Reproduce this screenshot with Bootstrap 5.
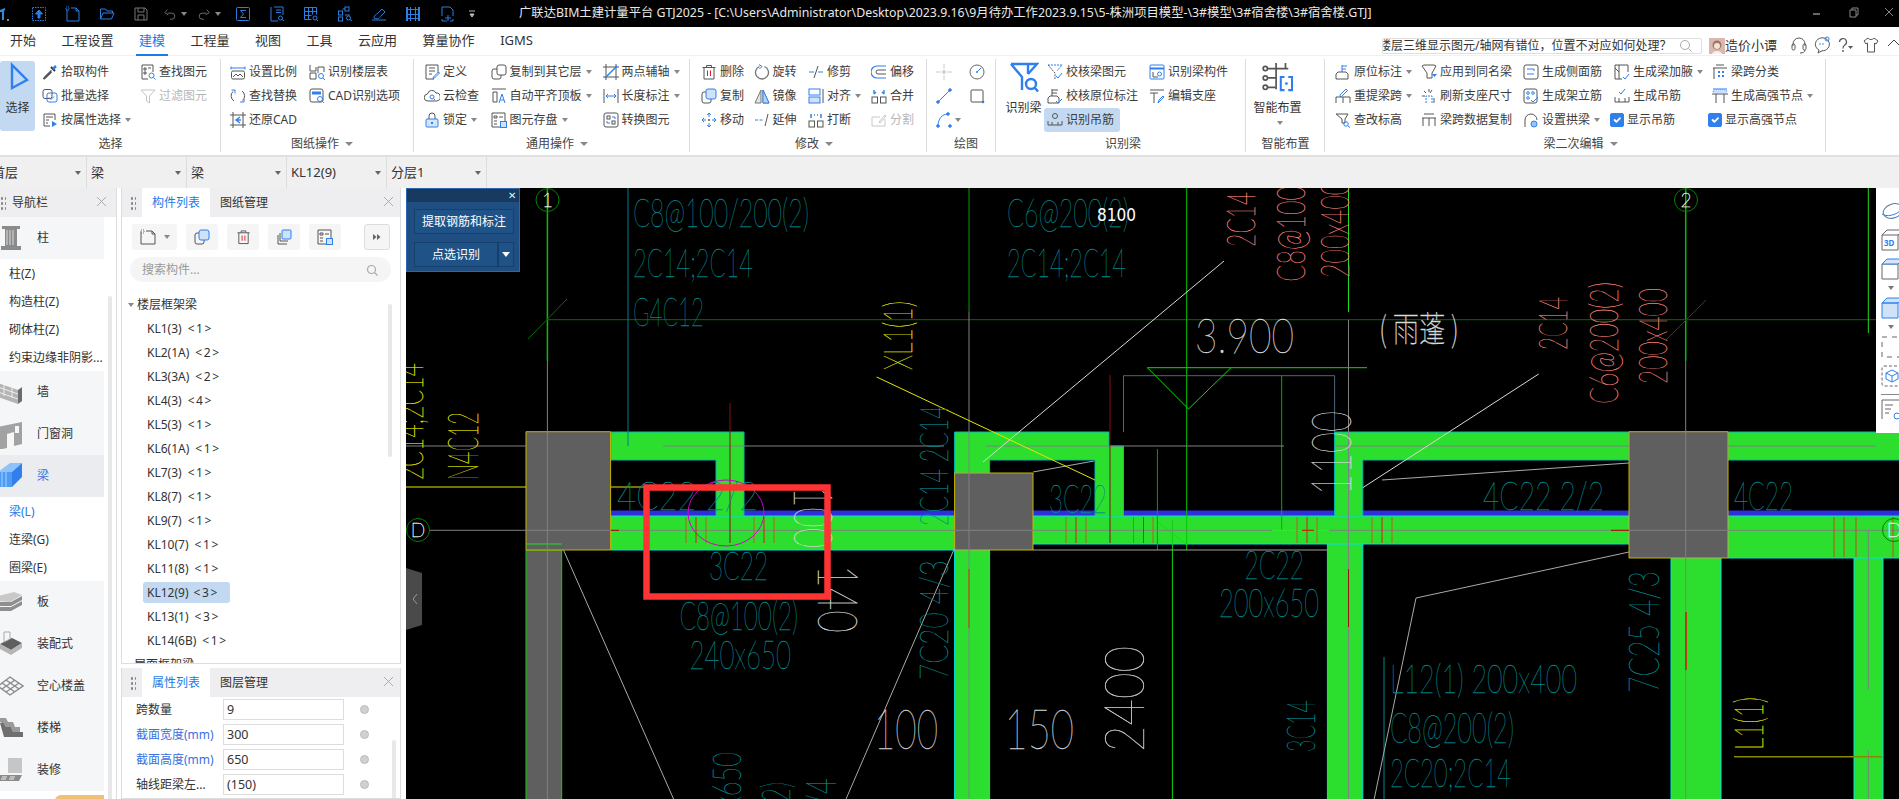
<!DOCTYPE html>
<html lang="zh-CN">
<head>
<meta charset="UTF-8">
<title>广联达BIM土建计量平台 GTJ2025</title>
<link href="https://cdn.jsdelivr.net/npm/bootstrap@5.3.0/dist/css/bootstrap.min.css" rel="stylesheet">
<style>
html, body { height: 799px; overflow: hidden; }
body { font-family: "Noto Sans", "Noto Sans CJK SC", sans-serif; font-size: 12px; color: #333; background: #fff; width: 1899px; }
svg { display: block; flex: none; }
.ttl-bar { height: 27px; background: #000; color: #e8e8e8; font-size: 13px; }
.qa-logo { width: 22px; }
.qa-slot { width: 34px; height: 27px; }
.qa-more { width: 16px; margin-right: 39px; }
.ttl-text { white-space: nowrap; font-size: 12.33px; }
.win-btn { position: absolute; top: 6px; }
.win-min { left: 1812px; } .win-max { left: 1849px; } .win-cls { left: 1884px; }
.tab-row { height: 28px; padding-left: 10px; gap: 25.5px; font-size: 13px; position: relative; }
.tab-on { color: #1e7ae6; position: relative; }
.tab-on::after { content: ""; position: absolute; left: -3px; right: -3px; bottom: -5px; height: 2px; background: #1e7ae6; }
.hlp-search { position: absolute; left: 1382px; top: 11px; width: 320px; height: 16px; border: 1px solid #e0e0e0; border-radius: 2px; overflow: hidden; white-space: nowrap; font-size: 12px; line-height: 14px; color: #333; }
.hlp-search span { margin-left: -4px; }
.hlp-user { position: absolute; left: 1709px; top: 10px; height: 17px; }
.hlp-ic { position: absolute; top: 9px; }
.hi-a { left: 1791px; } .hi-b { left: 1814px; } .hi-c { left: 1838px; } .hi-d { left: 1863px; } .hi-e { left: 1888px; }
.rb { height: 102px; border-top: 1px solid #f0f0f0; border-bottom: 2px solid #e0e0e0; }
.rb-grp { position: relative; height: 99px; display: flex; flex-direction: column; flex: none; }
.rb-grp::after { content: ""; position: absolute; right: 0; top: 3px; bottom: 3px; width: 1px; background: #ddd; }
.rb-body { height: 76px; padding-top: 4px; display: flex; flex: none; }
.rb-cap { height: 23px; line-height: 23px; text-align: center; color: #444; flex: none; }
.rb-col { display: flex; flex-direction: column; flex: none; }
.rb-it { height: 24px; display: flex; align-items: center; white-space: nowrap; color: #3c3c3c; }
.rb-it svg { width: 16px; height: 16px; margin-right: 3px; }
.rb-off { color: #b8b8b8; }
.rb-big { display: flex; flex-direction: column; align-items: center; flex: none; height: 70px; margin-top: 1px; }
.big-ic { margin-top: 1px; height: 30px; }
.big-lb { margin-top: 7px; line-height: 18px; }
.big-tri { margin: 4px 0 0 0; }
.big-smart { width: 63px; }
.rb-sel { background: #c2d9f1; border-radius: 3px; }
.tri { display: inline-block; border: 3px solid transparent; border-top: 4px solid #888; border-bottom: 0; margin-left: 4px; }
.tri-cap { border-width: 4px 4px 0; margin-left: 6px; vertical-align: 2px; }
.rb-chk.form-check-input { width: 14px; height: 14px; margin: 0 3px 0 -4px; border-radius: 2px; background-color: #2f80ed; border-color: #2f80ed; flex: none; }
.g1 { width: 221px; } .g2 { width: 193px; padding-left: 9px; } .g3 { width: 276px; padding-left: 10px; } .g4 { width: 237px; padding-left: 11px; }
.g5 { width: 69px; padding-left: 9px; } .g6 { width: 250px; padding-left: 4px; } .g7 { width: 79px; } .g8 { width: 501px; padding-left: 10px; }
.cw-35 { width: 35px; margin-right: 7px; } .cw-98 { width: 98px; } .cw-79 { width: 79px; } .cw-66 { width: 66.5px; } .cw-112 { width: 112px; }
.cw-52 { width: 52.5px; } .cw-54 { width: 54.5px; } .cw-63 { width: 63px; } .cw-32 { width: 32.5px; } .cw-47 { width: 47px; } .cw-102 { width: 102px; }
.cw-86 { width: 86px; } .cw-91 { width: 91px; }
.ind-sel { margin-left: -3px; padding-left: 3px; width: 76px; }
.cmb-bar { height: 31px; background: #f0f0f0; }
.cmb { width: 100px; height: 31px; border-right: 1px solid #ddd; padding: 0 5px 0 4px; font-size: 13px; flex: none; overflow: hidden; white-space: nowrap; }
.cmb-first { width: 87px; padding-left: 0; }
.cmb-first span:first-child { margin-left: -8px; }
.cmb-tri { border: 3px solid transparent; border-top: 4px solid #666; border-bottom: 0; }
.wk { height: 611px; }
.nv { width: 117px; border-right: 1px solid #ddd; position: relative; overflow: hidden; flex: none; }
.pn-head { height: 29px; background: #eeeef0; flex: none; position: relative; }
.grip { width: 6px; height: 14px; background-image: radial-gradient(circle, #888 1.1px, transparent 1.2px); background-size: 4px 5px; }
.nv-grip { margin-right: 6px; }
.pn-x { position: absolute; right: 6px; top: 8px; }
.nv .pn-x { right: 9px; }
.nv-cat { width: 104px; height: 42px; background: #f5f6f8; display: flex; align-items: center; }
.nv-cat svg { width: 26px; height: 30px; margin-left: -2px; margin-right: 13px; }
.nv-on { background: #ebecf0; color: #3d73d8; }
.nv-sub { height: 28px; line-height: 30px; padding-left: 9px; width: 104px; white-space: nowrap; }
.nv-sub-on { color: #1e7ae6; }
.nv-promo { width: 49px; height: 8px; margin: 4px 0 0 55px; background: #f0c078; border-radius: 6px 0 0 0; }
.sbar { position: absolute; background: #e8e8e8; border-radius: 2px; width: 4px; }
.nv-sbar { left: 108px; top: 108px; height: 520px; }
.list-sbar { left: 266px; top: 116px; height: 153px; }
.attr-sbar { left: 270px; top: 72px; height: 70px; }
.mid { width: 280px; margin-left: 4px; gap: 4px; flex: none; }
.pn { border: 1px solid #ddd; border-top: 0; position: relative; overflow: hidden; }
.pn-list { height: 476px; flex: none; }
.pn-grip { margin: 0 6px 0 8px; }
.pn-tab { height: 29px; line-height: 29px; width: 68px; text-align: center; flex: none; }
.pn-tab-on { background: #fff; color: #1e7ae6; }
.pn-tab-off { margin-left: 10px; width: 48px; }
.tbr { padding: 7px 10px 0 10px; gap: 9px; }
.tbt { width: 32px; height: 26px; background: #f5f5f6; border-radius: 3px; flex: none; }
.tbt-new { width: 45px; }
.tbt-new i { border: 3px solid transparent; border-top: 4px solid #888; border-bottom: 0; margin-left: 8px; }
.tbt-more { width: 26px; margin-left: auto; border: 1px solid #ddd; color: #555; }
.srch { margin: 7px 9px 0 8px; height: 26px; background: #f5f5f6; border-radius: 13px; padding: 1px 13px 0 12px; color: #999; font-size: 12px; }
.tree { margin-top: 11px; }
.tr-row { height: 24px; line-height: 24px; white-space: pre; padding-left: 12px; }
.tr-row i { display: inline-block; border: 3px solid transparent; border-top: 4px solid #888; border-bottom: 0; margin: 0 3px 2px -6px; vertical-align: middle; }
.tr-kl { padding-left: 25px; }
.tr-kl b { font-weight: 400; letter-spacing: 1.6px; margin-left: 6px; }
.tr-on { background: #c2d9f1; border-radius: 3px; margin-left: 21px; padding-left: 4px; width: 87px; height: 21px; line-height: 21px; margin-top: 1px; margin-bottom: 2px; }
.tr-on b { font-weight: 400; letter-spacing: 1.6px; margin-left: 5px; }
.at-row { height: 25px; padding-left: 14px; }
.at-lab { width: 87px; flex: none; white-space: nowrap; }
.at-blue { color: #3a6fe0; }
.at-val { width: 121px; height: 21px; line-height: 19px; border: 1px solid #ddd; padding-left: 3px; font-size: 12.5px; flex: none; }
.at-dot { width: 9px; height: 9px; border-radius: 50%; background: #d0d0d0; border: 1px solid #bbb; margin-left: 16px; }
.cv { position: relative; margin-left: 5px; width: 1494px; height: 611px; background: #000; flex: none; overflow: hidden; }
.cv > svg { width: 1494px; height: 611px; }
.dlg { position: absolute; left: 0; top: 0; width: 114px; height: 84px; background: #1f4e82; border: 1px solid #2d67a9; color: #fff; }
.dlg-top { height: 13px; background: #183a60; text-align: right; padding-right: 3px; line-height: 12px; font-size: 10px; color: #cfe; }
.dlg-btn { background: #1f5286; border: 1px solid #163f6b; height: 25px; margin: 0 0 0 7px; }
.dlg-wide { width: 100px; margin-top: 7px; }
.dlg-split { width: 84px; }
.dlg-arr { width: 16px; margin-left: 0; }
.dlg-arr i { border: 4px solid transparent; border-top: 5px solid #fff; border-bottom: 0; }
.rtb { position: absolute; right: 0; top: 0; width: 24px; height: 245px; background: #fff; padding: 12px 0 0 5px; overflow: hidden; }
.rtb svg { width: 22px; height: 22px; margin-bottom: 7px; }
.rtb i { display: block; margin: -1px 0 7px 7px; width: 0; border: 3px solid transparent; border-top: 4px solid #777; border-bottom: 0; }
.rtb hr { margin: 0 0 4px 0; opacity: 1; border-color: #888; }
.cad-t { font-family: Lato, "Noto Sans", sans-serif; font-weight: 100; }
.cad-cn { font-family: "Noto Sans CJK SC", sans-serif; font-weight: 100; }
</style>
</head>
<body>
<svg width="0" height="0" class="position-absolute">
<symbol id="q-up" viewBox="0 0 16 16" fill="none" stroke="#2b7fe0"><rect x="1.5" y="1.5" width="13" height="13" stroke-dasharray="1.5 1"/><path d="M8 4 4.5 8H7v4h2V8h2.500z" fill="#2b7fe0"/></symbol>
<symbol id="q-new" viewBox="0 0 16 16" fill="none" stroke="#2b7fe0"><path d="M2 3v12h12V5l-3-3H6"/><path d="M11 2v3h3" /><path d="M1 1h3v3H1z" stroke-dasharray="1 1"/></symbol>
<symbol id="q-open" viewBox="0 0 16 16" fill="none" stroke="#2b7fe0"><path d="M1.500 13V3h5l1.500 2h5.500v2M1.500 13l2.500-6h11l-2.500 6z"/></symbol>
<symbol id="q-save" viewBox="0 0 16 16" fill="none" stroke="#777"><path d="M2 2h10l2 2v10H2zM5 2v4h6V2M5 14V9h6v5"/></symbol>
<symbol id="q-undo" viewBox="0 0 16 16" fill="none" stroke="#777"><path d="M5 7H10a3.500 3.500 0 0 1 0 7H8M5 3 2 6.500 6 9"/></symbol>
<symbol id="q-redo" viewBox="0 0 16 16" fill="none" stroke="#777"><path d="M11 7H6a3.500 3.500 0 0 0 0 7h2M11 3l3 3.500L10 9"/></symbol>
<symbol id="q-sum" viewBox="0 0 16 16" fill="none" stroke="#2b7fe0"><rect x="1.500" y="1.500" width="13" height="13" rx="1"/><path d="M11 4.500H5.500L8.500 8l-3 3.500H11"/></symbol>
<symbol id="q-rep" viewBox="0 0 16 16" fill="none" stroke="#2b7fe0"><path d="M2 1v14h7"/><path d="M5 1h9v8M7 4h5M7 6.500h5"/><circle cx="11.500" cy="12" r="2"/><path d="m13 13.500 2 1.500"/></symbol>
<symbol id="q-tbl" viewBox="0 0 16 16" fill="none" stroke="#2b7fe0"><path d="M1.500 1.500h12v7M1.500 1.500v12h7M1.500 5.500h12M1.500 9.500h7M5.500 1.500v12M9.500 1.500v7"/><circle cx="12" cy="12" r="2"/><path d="m13.500 13.500 1.500 1.500"/></symbol>
<symbol id="q-cmp" viewBox="0 0 16 16" fill="none" stroke="#2b7fe0"><rect x="1.500" y="5" width="4" height="4"/><rect x="1.500" y="11" width="4" height="4"/><rect x="8" y="1" width="4" height="4"/><path d="M5.500 3H8M8 9h5"/><circle cx="11.500" cy="12" r="2"/><path d="m13 13.500 2 1.500"/></symbol>
<symbol id="q-pen" viewBox="0 0 16 16" fill="none" stroke="#2b7fe0"><path d="M1 14h14M3 12c0-3 2-3 4-5l4-4 3 3-4 4c-2 2-2 4-7 2z"/></symbol>
<symbol id="q-lad" viewBox="0 0 16 16" fill="#2b7fe0"><path d="M1 1h2v14H1zM13 1h2v14h-2zM5 1h1v14H5zM10 1h1v14h-1zM3 3h10v1H3zM3 8h10v1H3zM3 12h10v1H3z"/></symbol>
<symbol id="q-nw2" viewBox="0 0 16 16" fill="none" stroke="#2b7fe0"><path d="M3 10V1h8l3 3v6M3 13v2h5M14 13v2h-3"/><path d="M9 9v6M6 12h6"/></symbol>

<symbol id="pick" viewBox="0 0 16 16" fill="none" stroke="#555"><path d="M9.500 6.500 3 13l-1.500 2L3 14l6.500-6" stroke-width="1.600"/><path d="M9 3l4 4" stroke="#333" stroke-width="2"/><path d="M11 5l3-3" stroke="#2f80ed" stroke-width="2.500"/></symbol>
<symbol id="batch" viewBox="0 0 16 16" fill="none" stroke="#555"><rect x="1" y="1.500" width="9" height="9" rx="2"/><rect x="5" y="5" width="10" height="9" rx="2" stroke="#2f80ed"/><path d="m7 9.500 2 2 3-3" stroke="#2f80ed"/></symbol>
<symbol id="byprop" viewBox="0 0 16 16" fill="none" stroke="#555"><path d="M8 14H2V2h11v6M4 5h7M4 8h3M4 11h2"/><path d="M10 9l5 3-5 3z" fill="#2f80ed" stroke="none"/></symbol>
<symbol id="find" viewBox="0 0 16 16" fill="none" stroke="#555"><path d="M8 15H2V1h11v7"/><path d="M4 4h2v2H4zM8 4h3M4 8h2v2H4z"/><circle cx="11.500" cy="11.500" r="2.500" stroke="#2f80ed"/><path d="m13.500 13.500 2 2" stroke="#2f80ed"/></symbol>
<symbol id="filter" viewBox="0 0 16 16" fill="none" stroke="#c4c4c4"><path d="M1 2h14L9.500 8v7l-3-2V8z"/></symbol>
<symbol id="scale" viewBox="0 0 16 16" fill="none" stroke="#555"><path d="M1 4h14" stroke="#2f80ed"/><path d="M1 2.500v3M15 2.500v3" stroke="#2f80ed"/><rect x="1.500" y="7" width="13" height="8" rx="1.500"/><path d="m3 13 3-3 2 2 2-2 3 3"/></symbol>
<symbol id="replace" viewBox="0 0 16 16" fill="none" stroke="#555"><path d="M3 3.500A6 6 0 0 0 4 13" /><path d="M12.500 12.500A6 6 0 0 0 12 3"/><path d="M1.500 2 5 2v3.500M10 14h4v-3" stroke="#2f80ed"/></symbol>
<symbol id="restore" viewBox="0 0 16 16" fill="none" stroke="#555"><path d="M3 0v16M13 0v16M0 3h16M0 13h16"/><path d="M10 5 6 8l4 3M6 8h5" stroke="#2f80ed" stroke-width="1.400"/></symbol>
<symbol id="floortbl" viewBox="0 0 16 16" fill="none" stroke="#555"><path d="M1 1v6h6V3M1 9h6v6H1zM9 3h6v5M9 3v6"/><circle cx="12" cy="12" r="2.500" stroke="#2f80ed"/><path d="m14 14 2 2" stroke="#2f80ed"/></symbol>
<symbol id="cadopt" viewBox="0 0 16 16" fill="none" stroke="#555"><rect x="1" y="1" width="13" height="13" rx="2"/><path d="M3 5h9" stroke="#2f80ed" stroke-width="3"/><circle cx="11" cy="11" r="2.500" stroke="#2f80ed"/><path d="m13 13 2 2" stroke="#2f80ed"/></symbol>
<symbol id="define" viewBox="0 0 16 16" fill="none" stroke="#555"><path d="M10 15H2V1h12v8M5 4h6M5 7h6M5 10h3"/><path d="m9 15 .5-2 5-5 1 1-5 5z" stroke="#2f80ed"/></symbol>
<symbol id="cloud" viewBox="0 0 16 16" fill="none" stroke="#555"><path d="M4 13a3.500 3.500 0 0 1-.5-7A4.500 4.500 0 0 1 12 5a4 4 0 0 1 .500 8z"/><circle cx="8" cy="9" r="2" stroke="#2f80ed"/><path d="m9.500 10.500 1.500 1.500" stroke="#2f80ed"/></symbol>
<symbol id="lock" viewBox="0 0 16 16" fill="none" stroke="#555"><path d="M5 7V4a3 3 0 0 1 6 0v3"/><rect x="2" y="7" width="12" height="8" rx="1" fill="#d5e6fa" stroke="#2f80ed"/><path d="M8 10v2" stroke="#2f80ed" stroke-width="2"/></symbol>
<symbol id="copyto" viewBox="0 0 16 16" fill="none" stroke="#555"><rect x="1" y="5" width="9" height="10" rx="2"/><rect x="6" y="1" width="9" height="10" rx="2" fill="#fff"/></symbol>
<symbol id="flat" viewBox="0 0 16 16" fill="none" stroke="#555"><path d="M1 1h14M2 4h4v10H2z"/><path d="M8 15l3-9 3 9M9 12h4" stroke="#2f80ed"/></symbol>
<symbol id="saveel" viewBox="0 0 16 16" fill="none" stroke="#555"><path d="M9 15H1V1h13v8M3 4h3v2H3zM8 5h4M3 9h3M3 12h3"/><rect x="9.500" y="9.500" width="6" height="6" fill="#cfe2f8" stroke="#2f80ed"/></symbol>
<symbol id="twopt" viewBox="0 0 16 16" fill="none" stroke="#555"><path d="M3 0v16M0 13h16M13 0v16M0 3h16"/><path d="M2 14 14 2" stroke="#2f80ed" stroke-width="1.500"/></symbol>
<symbol id="length" viewBox="0 0 16 16" fill="none" stroke="#555"><path d="M1 1v14M15 1v14"/><path d="M3 8h10M3 8l2-2M3 8l2 2M13 8l-2-2M13 8l-2 2" stroke="#2f80ed"/></symbol>
<symbol id="convert" viewBox="0 0 16 16" fill="none" stroke="#555"><rect x="1" y="1" width="14" height="14" rx="2"/><rect x="4" y="4" width="3" height="3"/><rect x="9" y="9" width="3" height="3"/><path d="M9 5h3v2M7 11H4V9" stroke="#2f80ed"/></symbol>
<symbol id="del" viewBox="0 0 16 16" fill="none" stroke="#555"><path d="M1.500 3.500h13M5.500 3.500V1.500h5v2M3 3.500v11.500h10V3.500"/><path d="M6.500 6.500v5.500M9.500 6.500v5.500" stroke="#e02020"/></symbol>
<symbol id="copy" viewBox="0 0 16 16" fill="none" stroke="#555"><rect x="1" y="4" width="9" height="11" rx="2"/><rect x="5" y="1" width="10" height="10" rx="2" fill="#cfe2f8" stroke="#2f80ed"/></symbol>
<symbol id="move" viewBox="0 0 16 16" fill="none" stroke="#2f80ed"><path d="M8 1v4M8 11v4M1 8h4M11 8h4M8 1 6 3M8 1l2 2M8 15l-2-2M8 15l2-2M1 8l2-2M1 8l2 2M15 8l-2-2M15 8l-2 2"/><circle cx="8" cy="8" r="1" fill="#555" stroke="none"/></symbol>
<symbol id="rotate" viewBox="0 0 16 16" fill="none" stroke="#777"><path d="M5.500 2.500a6.500 6.500 0 1 0 5 0" stroke-width="1.300"/><path d="M5 .5 8 2.500 5.500 5" stroke="#2f80ed"/></symbol>
<symbol id="mirror" viewBox="0 0 16 16" fill="none" stroke="#777"><path d="M7 2v13H1zM9 2v13h6z" fill="#e4e4e4"/><path d="M9 2v13h6z" fill="#b9d5f5" stroke="#2f80ed"/></symbol>
<symbol id="extend" viewBox="0 0 16 16" fill="none" stroke="#2f80ed"><path d="M1 8h9" stroke-dasharray="3 1.500"/><path d="M11 14 14 2" stroke="#555"/></symbol>
<symbol id="trim" viewBox="0 0 16 16" fill="none" stroke="#2f80ed"><path d="M1 8h5M10 8h5"/><path d="M6 14 10 2" stroke="#555"/></symbol>
<symbol id="alignI" viewBox="0 0 16 16" fill="none" stroke="#2f80ed"><rect x="1" y="1" width="11" height="6"/><rect x="1" y="9" width="11" height="6" fill="#cfe2f8"/><path d="M15 1v14" stroke="#555"/></symbol>
<symbol id="brk" viewBox="0 0 16 16" fill="none" stroke="#555"><rect x="1" y="9" width="5.500" height="6"/><rect x="9.500" y="9" width="5.500" height="6"/><path d="M3 6V2M13 6V2M6 3h1M9 3h1" stroke="#2f80ed" stroke-width="1.500"/></symbol>
<symbol id="offset" viewBox="0 0 16 16" fill="none" stroke="#2f80ed"><path d="M15 2H6a6 6 0 0 0 0 12h9" stroke-width="1.200"/><path d="M15 6H7a2 2 0 0 0 0 4h8" stroke="#555"/></symbol>
<symbol id="merge" viewBox="0 0 16 16" fill="none" stroke="#555"><rect x="1" y="9" width="5.500" height="6"/><rect x="9.500" y="9" width="5.500" height="6"/><path d="M3 2v4M13 2v4M3 6l2-2M13 6l-2-2" stroke="#2f80ed" stroke-width="1.400"/></symbol>
<symbol id="split" viewBox="0 0 16 16" fill="none" stroke="#c8c8c8"><path d="M14 7v7H1V5h8M8 10l6-7 1 1-6 7z"/></symbol>
<symbol id="pt" viewBox="0 0 16 16" fill="none" stroke="#ccc"><path d="M8 0v5M8 11v5M0 8h5M11 8h5"/><circle cx="8" cy="8" r="1.500" fill="#ddd"/></symbol>
<symbol id="circ" viewBox="0 0 16 16" fill="none" stroke="#666"><circle cx="8" cy="8" r="7"/><path d="M8 8l4-4" stroke="#2f80ed"/><circle cx="8" cy="8" r="1" fill="#2f80ed" stroke="none"/></symbol>
<symbol id="ln" viewBox="0 0 16 16" fill="none" stroke="#2f80ed"><path d="M2 14 14 2"/><circle cx="2" cy="14" r="1.300" fill="#2f80ed"/><circle cx="14" cy="2" r="1.300" fill="#2f80ed"/></symbol>
<symbol id="rct" viewBox="0 0 16 16" fill="none" stroke="#555"><rect x="2" y="2" width="12" height="12" rx="1"/><circle cx="14" cy="14" r="1.300" fill="#2f80ed" stroke="none"/></symbol>
<symbol id="arc" viewBox="0 0 16 16" fill="none" stroke="#2f80ed"><path d="M2 14C2 7 6 2 12 2"/><circle cx="2" cy="14" r="1.300" fill="#2f80ed"/><circle cx="14" cy="14" r="1.300" fill="#2f80ed"/><circle cx="12" cy="2" r="1.300" fill="#2f80ed"/></symbol>
<symbol id="recog" viewBox="0 0 30 30" fill="none" stroke="#2f80ed" stroke-width="2.400"><path d="M2 2h26l-9 10M2 2l11 13v13"/><path d="M19 2v10"/><circle cx="22" cy="22" r="5"/><path d="m26 26 3 3.500"/></symbol>
<symbol id="chk1" viewBox="0 0 16 16" fill="none" stroke="#2f80ed"><path d="M1 1h14L10 7" stroke-dasharray="2 1"/><path d="M1 1l7 8v6" stroke="#555" stroke-dasharray="2 1"/><path d="m9 12 2 2 4-5"/></symbol>
<symbol id="chk2" viewBox="0 0 16 16" fill="none" stroke="#555"><path d="M5 1v7M5 2h6M5 5h5"/><path d="M1 15V10l2-2h7l2 2v5z"/><path d="m9 13 2 2 4-4" stroke="#2f80ed"/></symbol>
<symbol id="hanger" viewBox="0 0 16 16" fill="none" stroke="#555"><circle cx="8" cy="4" r="2.500"/><path d="M1 9v4h14V9M5 13v-3M11 13v-3"/></symbol>
<symbol id="comp" viewBox="0 0 16 16" fill="none" stroke="#2f80ed"><rect x="1" y="1" width="14" height="14" rx="1"/><path d="M1 4.500h14" stroke-width="2"/><path d="M4 8v5h5" stroke="#555"/><circle cx="10.500" cy="10" r="2"/></symbol>
<symbol id="sup" viewBox="0 0 16 16" fill="none" stroke="#555"><path d="M1 2h14M1 5h8M5 5v10"/><path d="m9 15 1-3 4-4 1 1-4 4z" stroke="#2f80ed"/></symbol>
<symbol id="inpl" viewBox="0 0 16 16" fill="none" stroke="#555"><path d="M7 1v7M7 2h5M7 5h4" stroke="#2f80ed"/><path d="M1 15V10l2-2h8l2 2v5z"/></symbol>
<symbol id="same" viewBox="0 0 16 16" fill="none" stroke="#555"><path d="M1 2l2-1h10l2 1-4 7v5H6V9z"/><path d="M11 10h5l-2.500 3z" fill="#2f80ed" stroke="none"/></symbol>
<symbol id="side" viewBox="0 0 16 16" fill="none" stroke="#555"><rect x="1" y="1" width="14" height="14" rx="2"/><path d="M4 5h7v2M4 10h7" stroke="#2f80ed"/></symbol>
<symbol id="haun" viewBox="0 0 16 16" fill="none" stroke="#555"><path d="M1 1h13v7M1 1v14h7M5 1v14M1 4l4 4"/><path d="m9 13 2 2 4-5" stroke="#2f80ed"/></symbol>
<symbol id="spcl" viewBox="0 0 16 16" fill="none" stroke="#555"><path d="M4 1h8M1 4h14M2 4v11"/><path d="M6 7h2v2H6zM10 7h2v2h-2zM6 11h2v2H6zM10 11h2v2h-2z" fill="#2f80ed" stroke="none"/></symbol>
<symbol id="rera" viewBox="0 0 16 16" fill="none" stroke="#555"><path d="M1 15V9h14v6M8 9v6"/><path d="m5 7 6-6 1.500 1.500-6 6H5z" stroke="#2f80ed"/></symbol>
<symbol id="refr" viewBox="0 0 16 16" fill="none" stroke="#555"><path d="M8 1v3M3 3l2 2M1 8h3M11 2l-2 3"/><path d="M5 15V8h6v7" stroke="#2f80ed" stroke-dasharray="2 1"/><path d="M13 10v5"/></symbol>
<symbol id="erct" viewBox="0 0 16 16" fill="none" stroke="#555"><rect x="1" y="1" width="13" height="14" rx="2"/><circle cx="5" cy="5" r="1.300" stroke="#2f80ed"/><circle cx="10" cy="5" r="1.300" stroke="#2f80ed"/><circle cx="5" cy="10" r="1.300" stroke="#2f80ed"/><path d="m8 12 2 2 5-5" stroke="#2f80ed"/></symbol>
<symbol id="ghan" viewBox="0 0 16 16" fill="none" stroke="#555"><path d="M1 9v5h14V9M5 14v-4M11 14v-4"/><path d="m5 4 2 2 4-5" stroke="#2f80ed"/></symbol>
<symbol id="hsnd" viewBox="0 0 16 16" fill="none" stroke="#555"><path d="M1 1h14" stroke="#2f80ed"/><path d="M1 4l1-2h12l1 2z" stroke="#2f80ed" stroke-dasharray="1 1"/><path d="M0 6h16M4 6v9M12 6v9"/></symbol>
<symbol id="elev" viewBox="0 0 16 16" fill="none" stroke="#555"><path d="M1 2h12l-3 5v4H7V7z"/><circle cx="11" cy="12" r="2.200" stroke="#2f80ed"/><path d="m13 14 2 1.500" stroke="#2f80ed"/></symbol>
<symbol id="spcp" viewBox="0 0 16 16" fill="none" stroke="#555"><path d="M3 2h10M1 6h14M2 6v8M8 6v8M14 6v8"/></symbol>
<symbol id="arch" viewBox="0 0 16 16" fill="none" stroke="#555"><path d="M2 13V8a6 6 0 0 1 12 0"/><path d="M2 15v-2"/><circle cx="11" cy="12" r="3" fill="#9cc3f0" stroke="#2f80ed"/></symbol>
<symbol id="smart" viewBox="0 0 33 32" fill="none" stroke="#555" stroke-width="1.800"><path d="M6 7h22M6 17h10M6 27h8M15 1v28M25 1v6"/><circle cx="3.500" cy="7" r="2.300"/><circle cx="3.500" cy="17" r="2.300"/><circle cx="3.500" cy="27" r="2.300"/><path d="M21 16h-1v14h1M31 16h1v14h-1M20 16h4M28 16h4M20 30h4M28 30h4" stroke="#2f80ed" stroke-width="2.200"/><circle cx="26" cy="23" r="1.500" fill="#2f80ed" stroke="none"/></symbol>
</svg>

<header class="ttl-bar d-flex align-items-center position-relative">
  <div class="qa-logo d-flex"><svg width="14" height="14" viewBox="0 0 14 14"><path d="M0 3 5 1v2L4 4v9H2V5H0z" fill="#2b8ce0"/><path d="M7 12h2v2H7z" fill="#888"/></svg></div>
  <div class="qa-slot d-flex align-items-center justify-content-center"><svg width="16" height="16"><use href="#q-up"/></svg></div>
  <div class="qa-slot d-flex align-items-center justify-content-center"><svg width="16" height="16"><use href="#q-new"/></svg></div>
  <div class="qa-slot d-flex align-items-center justify-content-center"><svg width="16" height="16"><use href="#q-open"/></svg></div>
  <div class="qa-slot d-flex align-items-center justify-content-center"><svg width="16" height="16"><use href="#q-save"/></svg></div>
  <div class="qa-slot d-flex align-items-center justify-content-center"><svg width="14" height="16"><use href="#q-undo"/></svg><span class="tri"></span></div>
  <div class="qa-slot d-flex align-items-center justify-content-center"><svg width="14" height="16"><use href="#q-redo"/></svg><span class="tri"></span></div>
  <div class="qa-slot d-flex align-items-center justify-content-center"><svg width="16" height="16"><use href="#q-sum"/></svg></div>
  <div class="qa-slot d-flex align-items-center justify-content-center"><svg width="16" height="16"><use href="#q-rep"/></svg></div>
  <div class="qa-slot d-flex align-items-center justify-content-center"><svg width="16" height="16"><use href="#q-tbl"/></svg></div>
  <div class="qa-slot d-flex align-items-center justify-content-center"><svg width="16" height="16"><use href="#q-cmp"/></svg></div>
  <div class="qa-slot d-flex align-items-center justify-content-center"><svg width="16" height="16"><use href="#q-pen"/></svg></div>
  <div class="qa-slot d-flex align-items-center justify-content-center"><svg width="16" height="16"><use href="#q-lad"/></svg></div>
  <div class="qa-slot d-flex align-items-center justify-content-center"><svg width="16" height="16"><use href="#q-nw2"/></svg></div>
  <div class="qa-more d-flex flex-column align-items-center"><svg width="8" height="8" viewBox="0 0 8 8"><path d="M1 1h6M2 4h4l-2 3z" stroke="#bbb" fill="#bbb"/></svg></div>
  <div class="ttl-text">广联达BIM土建计量平台 GTJ2025 - [C:\Users\Administrator\Desktop\2023.9.16\9月待办工作2023.9.15\5-株洲项目模型-\3#模型\3#宿舍楼\3#宿舍楼.GTJ]</div>
  <svg class="win-btn win-min" width="10" height="14" viewBox="0 0 10 14"><path d="M1 8h7" stroke="#888" stroke-width="1.500"/></svg>
  <svg class="win-btn win-max" width="10" height="14" viewBox="0 0 10 14"><path d="M1 4h6v7H1zM3 4V2h6v7H7" stroke="#888" fill="none"/></svg>
  <svg class="win-btn win-cls" width="10" height="14" viewBox="0 0 10 14"><path d="m1 2 8 8M9 2l-8 8" stroke="#888"/></svg>
</header>

<nav class="tab-row d-flex align-items-center">
  <span>开始</span><span>工程设置</span><span class="tab-on">建模</span><span>工程量</span><span>视图</span><span>工具</span><span>云应用</span><span>算量协作</span><span>IGMS</span>
  <div class="hlp-search d-flex justify-content-between"><span>楼层三维显示图元/轴网有错位，位置不对应如何处理？</span><svg class="me-2 mt-0" width="14" height="14" viewBox="0 0 14 14" fill="none" stroke="#aaa"><circle cx="6" cy="6" r="4.500"/><path d="m9.500 9.500 3 3"/></svg></div>
  <div class="hlp-user d-flex align-items-center"><svg width="16" height="16" viewBox="0 0 16 16"><rect width="16" height="16" fill="#dcb7b2"/><circle cx="8" cy="7" r="4.500" fill="#9a7a62"/><circle cx="8" cy="8" r="3" fill="#f6e2d6"/><path d="M3 16c1-4 9-4 10 0z" fill="#f4f1ee"/></svg><span>造价小谭</span></div>
  <svg class="hlp-ic hi-a" width="16" height="18" viewBox="0 0 16 18" fill="none" stroke="#555"><path d="M2 10V8a6 6 0 0 1 12 0v2"/><rect x="1" y="8" width="3" height="6" rx="1.500"/><rect x="12" y="8" width="3" height="6" rx="1.500"/><path d="M14 14c0 2-2 3-5 3"/></svg>
  <svg class="hlp-ic hi-b" width="17" height="18" viewBox="0 0 17 18" fill="none" stroke="#555"><path d="M5 14a7 6.500 0 1 1 3 .800L4 17z"/><circle cx="6" cy="8" r=".8" fill="#2f80ed" stroke="none"/><circle cx="9" cy="8" r=".8" fill="#2f80ed" stroke="none"/><circle cx="13" cy="3" r="2" stroke="#2f80ed"/></svg>
  <svg class="hlp-ic hi-c" width="16" height="18" viewBox="0 0 16 18" fill="none" stroke="#555"><path d="M1.500 6a3.500 3.500 0 1 1 5 3.200C5 10 5 11 5 12.500" stroke-width="1.200"/><circle cx="5" cy="15" r=".9" fill="#555" stroke="none"/><path d="M10 10h5l-2.500 3z" fill="#555" stroke="none"/></svg>
  <svg class="hlp-ic hi-d" width="16" height="18" viewBox="0 0 16 18" fill="none" stroke="#555"><path d="M5 2 1 5l2 3 1.500-1v9h7V7L13 8l2-3-4-3C10 4 6 4 5 2z"/></svg>
  <svg class="hlp-ic hi-e" width="11" height="18" viewBox="0 0 11 18" fill="none" stroke="#444"><path d="m0 10 6-6 6 6"/></svg>
</nav>

<section class="rb d-flex">
  <div class="rb-grp g1">
    <div class="rb-body">
      <div class="rb-big rb-sel cw-35"><svg width="26" height="30" viewBox="0 0 26 30" class="big-ic" fill="none" stroke="#2f80ed" stroke-width="2.400"><path d="M7 3v23l15-8z"/></svg><span class="big-lb">选择</span></div>
      <div class="rb-col cw-98">
        <div class="rb-it"><svg><use href="#pick"/></svg>拾取构件</div>
        <div class="rb-it"><svg><use href="#batch"/></svg>批量选择</div>
        <div class="rb-it"><svg><use href="#byprop"/></svg>按属性选择<span class="tri"></span></div>
      </div>
      <div class="rb-col">
        <div class="rb-it"><svg><use href="#find"/></svg>查找图元</div>
        <div class="rb-it rb-off"><svg><use href="#filter"/></svg>过滤图元</div>
      </div>
    </div>
    <div class="rb-cap">选择</div>
  </div>
  <div class="rb-grp g2">
    <div class="rb-body">
      <div class="rb-col cw-79">
        <div class="rb-it"><svg><use href="#scale"/></svg>设置比例</div>
        <div class="rb-it"><svg><use href="#replace"/></svg>查找替换</div>
        <div class="rb-it"><svg><use href="#restore"/></svg>还原CAD</div>
      </div>
      <div class="rb-col">
        <div class="rb-it"><svg><use href="#floortbl"/></svg>识别楼层表</div>
        <div class="rb-it"><svg><use href="#cadopt"/></svg>CAD识别选项</div>
      </div>
    </div>
    <div class="rb-cap">图纸操作<span class="tri tri-cap"></span></div>
  </div>
  <div class="rb-grp g3">
    <div class="rb-body">
      <div class="rb-col cw-66">
        <div class="rb-it"><svg><use href="#define"/></svg>定义</div>
        <div class="rb-it"><svg><use href="#cloud"/></svg>云检查</div>
        <div class="rb-it"><svg><use href="#lock"/></svg>锁定<span class="tri"></span></div>
      </div>
      <div class="rb-col cw-112">
        <div class="rb-it"><svg><use href="#copyto"/></svg>复制到其它层<span class="tri"></span></div>
        <div class="rb-it"><svg><use href="#flat"/></svg>自动平齐顶板<span class="tri"></span></div>
        <div class="rb-it"><svg><use href="#saveel"/></svg>图元存盘<span class="tri"></span></div>
      </div>
      <div class="rb-col">
        <div class="rb-it"><svg><use href="#twopt"/></svg>两点辅轴<span class="tri"></span></div>
        <div class="rb-it"><svg><use href="#length"/></svg>长度标注<span class="tri"></span></div>
        <div class="rb-it"><svg><use href="#convert"/></svg>转换图元</div>
      </div>
    </div>
    <div class="rb-cap">通用操作<span class="tri tri-cap"></span></div>
  </div>
  <div class="rb-grp g4">
    <div class="rb-body">
      <div class="rb-col cw-52">
        <div class="rb-it"><svg><use href="#del"/></svg>删除</div>
        <div class="rb-it"><svg><use href="#copy"/></svg>复制</div>
        <div class="rb-it"><svg><use href="#move"/></svg>移动</div>
      </div>
      <div class="rb-col cw-54">
        <div class="rb-it"><svg><use href="#rotate"/></svg>旋转</div>
        <div class="rb-it"><svg><use href="#mirror"/></svg>镜像</div>
        <div class="rb-it"><svg><use href="#extend"/></svg>延伸</div>
      </div>
      <div class="rb-col cw-63">
        <div class="rb-it"><svg><use href="#trim"/></svg>修剪</div>
        <div class="rb-it"><svg><use href="#alignI"/></svg>对齐<span class="tri"></span></div>
        <div class="rb-it"><svg><use href="#brk"/></svg>打断</div>
      </div>
      <div class="rb-col">
        <div class="rb-it"><svg><use href="#offset"/></svg>偏移</div>
        <div class="rb-it"><svg><use href="#merge"/></svg>合并</div>
        <div class="rb-it rb-off"><svg><use href="#split"/></svg>分割</div>
      </div>
    </div>
    <div class="rb-cap">修改<span class="tri tri-cap"></span></div>
  </div>
  <div class="rb-grp g5">
    <div class="rb-body">
      <div class="rb-col cw-32">
        <div class="rb-it"><svg><use href="#pt"/></svg></div>
        <div class="rb-it"><svg><use href="#ln"/></svg></div>
        <div class="rb-it"><svg><use href="#arc"/></svg><span class="tri ms-0"></span></div>
      </div>
      <div class="rb-col">
        <div class="rb-it"><svg><use href="#circ"/></svg></div>
        <div class="rb-it"><svg><use href="#rct"/></svg></div>
      </div>
    </div>
    <div class="rb-cap">绘图</div>
  </div>
  <div class="rb-grp g6">
    <div class="rb-body">
      <div class="rb-big cw-47"><svg width="30" height="30" class="big-ic"><use href="#recog"/></svg><span class="big-lb">识别梁</span></div>
      <div class="rb-col cw-102">
        <div class="rb-it"><svg><use href="#chk1"/></svg>校核梁图元</div>
        <div class="rb-it"><svg><use href="#chk2"/></svg>校核原位标注</div>
        <div class="rb-it rb-sel ind-sel"><svg><use href="#hanger"/></svg>识别吊筋</div>
      </div>
      <div class="rb-col">
        <div class="rb-it"><svg><use href="#comp"/></svg>识别梁构件</div>
        <div class="rb-it"><svg><use href="#sup"/></svg>编辑支座</div>
      </div>
    </div>
    <div class="rb-cap">识别梁</div>
  </div>
  <div class="rb-grp g7">
    <div class="rb-body">
      <div class="rb-big big-smart"><svg width="33" height="32" class="big-ic"><use href="#smart"/></svg><span class="big-lb">智能布置</span><span class="tri big-tri"></span></div>
    </div>
    <div class="rb-cap">智能布置</div>
  </div>
  <div class="rb-grp g8">
    <div class="rb-body">
      <div class="rb-col cw-86">
        <div class="rb-it"><svg><use href="#inpl"/></svg>原位标注<span class="tri"></span></div>
        <div class="rb-it"><svg><use href="#rera"/></svg>重提梁跨<span class="tri"></span></div>
        <div class="rb-it"><svg><use href="#elev"/></svg>查改标高</div>
      </div>
      <div class="rb-col cw-102">
        <div class="rb-it"><svg><use href="#same"/></svg>应用到同名梁</div>
        <div class="rb-it"><svg><use href="#refr"/></svg>刷新支座尺寸</div>
        <div class="rb-it"><svg><use href="#spcp"/></svg>梁跨数据复制</div>
      </div>
      <div class="rb-col cw-91">
        <div class="rb-it"><svg><use href="#side"/></svg>生成侧面筋</div>
        <div class="rb-it"><svg><use href="#erct"/></svg>生成架立筋</div>
        <div class="rb-it"><svg><use href="#arch"/></svg>设置拱梁<span class="tri"></span></div>
      </div>
      <div class="rb-col cw-98">
        <div class="rb-it"><svg><use href="#haun"/></svg>生成梁加腋<span class="tri"></span></div>
        <div class="rb-it"><svg><use href="#ghan"/></svg>生成吊筋</div>
        <div class="rb-it"><input class="form-check-input rb-chk" type="checkbox" checked>显示吊筋</div>
      </div>
      <div class="rb-col">
        <div class="rb-it"><svg><use href="#spcl"/></svg>梁跨分类</div>
        <div class="rb-it"><svg><use href="#hsnd"/></svg>生成高强节点<span class="tri"></span></div>
        <div class="rb-it"><input class="form-check-input rb-chk" type="checkbox" checked>显示高强节点</div>
      </div>
    </div>
    <div class="rb-cap">梁二次编辑<span class="tri tri-cap"></span></div>
  </div>
</section>

<div class="cmb-bar d-flex">
  <div class="cmb cmb-first d-flex align-items-center justify-content-between"><span>首层</span><span class="cmb-tri"></span></div>
  <div class="cmb d-flex align-items-center justify-content-between"><span>梁</span><span class="cmb-tri"></span></div>
  <div class="cmb d-flex align-items-center justify-content-between"><span>梁</span><span class="cmb-tri"></span></div>
  <div class="cmb d-flex align-items-center justify-content-between"><span>KL12(9)</span><span class="cmb-tri"></span></div>
  <div class="cmb d-flex align-items-center justify-content-between"><span>分层1</span><span class="cmb-tri"></span></div>
</div>

<main class="wk d-flex">
  <aside class="nv">
    <div class="pn-head d-flex align-items-center"><div class="grip nv-grip"></div><span>导航栏</span>
      <svg class="pn-x" width="11" height="11" viewBox="0 0 11 11" stroke="#aaa"><path d="m1 1 9 9M10 1l-9 9"/></svg></div>
    <div class="nv-cat"><svg viewBox="0 0 26 30"><path d="M4 3h18v3h-3v17h4v4H3v-4h4V6H4z" fill="#8b8b8b"/><path d="M9 7v15M12 7v15M15 7v15" stroke="#dcdcdc"/></svg>柱</div>
    <div class="nv-sub">柱(Z)</div>
    <div class="nv-sub">构造柱(Z)</div>
    <div class="nv-sub">砌体柱(Z)</div>
    <div class="nv-sub">约束边缘非阴影...</div>
    <div class="nv-cat"><svg viewBox="0 0 26 30"><path d="M0 6 20 13v14L0 20z" fill="#b4b4b4"/><path d="m20 13 4-3v14l-4 3z" fill="#6c6c6c"/><path d="m0 10 20 7M0 15l20 7M6 8v5M14 11v5M6 13v6M14 16v5" stroke="#eee"/></svg>墙</div>
    <div class="nv-cat"><svg viewBox="0 0 26 30"><path d="M0 8 24 3v22l-8 2V13l-7 2v14l-9 2z" fill="#a2a2a2"/><path d="M17 7h4v7h-4z" fill="#f5f6f8"/></svg>门窗洞</div>
    <div class="nv-cat nv-on"><svg viewBox="0 0 26 30"><path d="M0 11h14v15H0z" fill="#4c9bf5"/><path d="M0 11 12 2h12l-10 9z" fill="#8fc2fa"/><path d="m14 11 10-9v14l-10 10z" fill="#2f80ed"/><path d="M4 11v15M8 11v15" stroke="#a8d0fa"/></svg>梁</div>
    <div class="nv-sub nv-sub-on">梁(L)</div>
    <div class="nv-sub">连梁(G)</div>
    <div class="nv-sub">圈梁(E)</div>
    <div class="nv-cat"><svg viewBox="0 0 26 30"><path d="M0 9 16 5l8 3-12 7-12-1z" fill="#c9c9c9"/><path d="M0 15h13l11-6v4l-11 6H0zM0 20h13l11-6v4l-11 6H0z" fill="#8f8f8f"/></svg>板</div>
    <div class="nv-cat"><svg viewBox="0 0 26 30"><path d="m2 15 12-6 10 5-11 7z" fill="#5f5f5f"/><path d="m2 15 11 6v5L2 20zM13 21l11-7v5l-11 7z" fill="#b5b5b5"/><path d="M6 3h6v7l-6 3z" fill="none" stroke="#aaa"/></svg>装配式</div>
    <div class="nv-cat"><svg viewBox="0 0 26 30" fill="none" stroke="#8a8a8a" stroke-width="1.400"><path d="M0 15 12 6l13 9-13 9zM4 12l13 9M8 9l13 9M8 21l13-9M4 18 17 9"/></svg>空心楼盖</div>
    <div class="nv-cat"><svg viewBox="0 0 26 30"><path d="M2 5h6l2 4h5l2 5h5v5H15l-2-5H8L5 9H2z" fill="#9a9a9a"/><path d="m2 10 4 14h19v-5H15l-2-5H8L5 9z" fill="#6f6f6f"/></svg>楼梯</div>
    <div class="nv-cat"><svg viewBox="0 0 26 30"><path d="M10 3h14v15H10z" fill="#c6c6c6"/><path d="M0 20h24l-3 6H0z" fill="#8b8b8b"/><path d="M4 22h5M12 22h5M3 24h5M11 24h5" stroke="#eee"/></svg>装修</div>
    <div class="nv-promo"></div>
    <div class="sbar nv-sbar"></div>
  </aside>

  <div class="mid d-flex flex-column">
    <section class="pn pn-list d-flex flex-column">
      <div class="pn-head d-flex align-items-center"><div class="grip pn-grip"></div><div class="pn-tab pn-tab-on">构件列表</div><div class="pn-tab pn-tab-off">图纸管理</div>
        <svg class="pn-x" width="11" height="11" viewBox="0 0 11 11" stroke="#aaa"><path d="m1 1 9 9M10 1l-9 9"/></svg></div>
      <div class="tbr d-flex">
        <div class="tbt tbt-new d-flex align-items-center justify-content-center"><svg width="16" height="16" viewBox="0 0 16 16" fill="none" stroke="#555"><path d="M1 3v12h14V5l-3-3H6M12 2v3h3"/><path d="M1 1h3v3H1z" stroke="#2f80ed" stroke-dasharray="1 1"/></svg><i></i></div>
        <div class="tbt d-flex align-items-center justify-content-center"><svg width="16" height="16"><use href="#copy"/></svg></div>
        <div class="tbt d-flex align-items-center justify-content-center"><svg width="15" height="16"><use href="#del"/></svg></div>
        <div class="tbt d-flex align-items-center justify-content-center"><svg width="16" height="16" viewBox="0 0 16 16" fill="none" stroke="#555"><path d="M2 6v9h9"/><path d="M4 4v8h8"/><rect x="6" y="1" width="9" height="9" rx="1" fill="#cfe2f8" stroke="#2f80ed"/></svg></div>
        <div class="tbt d-flex align-items-center justify-content-center"><svg width="16" height="16"><use href="#saveel"/></svg></div>
        <div class="tbt tbt-more d-flex align-items-center justify-content-center"><svg width="8" height="6" viewBox="0 0 8 6" fill="#666"><path d="M0 0v6l3.500-3zM4 0v6l3.500-3z"/></svg></div>
      </div>
      <div class="srch d-flex align-items-center justify-content-between"><span>搜索构件...</span><svg width="12" height="12" viewBox="0 0 12 12" fill="none" stroke="#aaa" stroke-width="1.200"><circle cx="5.500" cy="5.500" r="4"/><path d="m8.500 8.500 3 3"/></svg></div>
      <div class="tree flex-grow-1 overflow-hidden">
        <div class="tr-row"><i></i>楼层框架梁</div>
        <div class="tr-row tr-kl">KL1(3)<b>&lt;1&gt;</b></div>
        <div class="tr-row tr-kl">KL2(1A)<b>&lt;2&gt;</b></div>
        <div class="tr-row tr-kl">KL3(3A)<b>&lt;2&gt;</b></div>
        <div class="tr-row tr-kl">KL4(3)<b>&lt;4&gt;</b></div>
        <div class="tr-row tr-kl">KL5(3)<b>&lt;1&gt;</b></div>
        <div class="tr-row tr-kl">KL6(1A)<b>&lt;1&gt;</b></div>
        <div class="tr-row tr-kl">KL7(3)<b>&lt;1&gt;</b></div>
        <div class="tr-row tr-kl">KL8(7)<b>&lt;1&gt;</b></div>
        <div class="tr-row tr-kl">KL9(7)<b>&lt;1&gt;</b></div>
        <div class="tr-row tr-kl">KL10(7)<b>&lt;1&gt;</b></div>
        <div class="tr-row tr-kl">KL11(8)<b>&lt;1&gt;</b></div>
        <div class="tr-row tr-on">KL12(9)<b>&lt;3&gt;</b></div>
        <div class="tr-row tr-kl">KL13(1)<b>&lt;3&gt;</b></div>
        <div class="tr-row tr-kl">KL14(6B)<b>&lt;1&gt;</b></div>
        <div class="tr-row">屋面框架梁</div>
      </div>
      <div class="sbar list-sbar"></div>
    </section>
    <section class="pn flex-grow-1 d-flex flex-column">
      <div class="pn-head d-flex align-items-center"><div class="grip pn-grip"></div><div class="pn-tab pn-tab-on">属性列表</div><div class="pn-tab pn-tab-off">图层管理</div>
        <svg class="pn-x" width="11" height="11" viewBox="0 0 11 11" stroke="#aaa"><path d="m1 1 9 9M10 1l-9 9"/></svg></div>
      <div class="at-row d-flex align-items-center"><div class="at-lab">跨数量</div><div class="at-val">9</div><div class="at-dot"></div></div>
      <div class="at-row d-flex align-items-center"><div class="at-lab at-blue">截面宽度(mm)</div><div class="at-val">300</div><div class="at-dot"></div></div>
      <div class="at-row d-flex align-items-center"><div class="at-lab at-blue">截面高度(mm)</div><div class="at-val">650</div><div class="at-dot"></div></div>
      <div class="at-row d-flex align-items-center"><div class="at-lab">轴线距梁左...</div><div class="at-val">(150)</div><div class="at-dot"></div></div>
      <div class="sbar attr-sbar"></div>
    </section>
  </div>

  <div class="cv">
    <svg id="cad" viewBox="405 188 1494 611" xmlns="http://www.w3.org/2000/svg"></svg>
    <div class="dlg">
      <div class="dlg-top">✕</div>
      <div class="dlg-btn dlg-wide d-flex align-items-center justify-content-center">提取钢筋和标注</div>
      <div class="d-flex mt-2">
        <div class="dlg-btn dlg-split d-flex align-items-center justify-content-center">点选识别</div>
        <div class="dlg-btn dlg-arr d-flex align-items-center justify-content-center"><i></i></div>
      </div>
    </div>
    <div class="rtb">
      <svg viewBox="0 0 22 22" fill="none" stroke="#5a7aa0"><ellipse cx="12" cy="11" rx="10" ry="7" transform="rotate(-20 12 11)"/><path d="M1 14c4 3 14 2 20-5" stroke="#2f80ed"/></svg>
      <svg viewBox="0 0 22 22" fill="none" stroke="#666"><path d="M1 6h16v15H1zM1 6l5-5h16M17 6l5-5"/><text x="3" y="17" font-size="8" font-weight="700" fill="#2f80ed" stroke="none" font-family="Noto Sans">3D</text></svg>
      <svg viewBox="0 0 22 22" fill="none" stroke="#666"><path d="M1 6h16v15H1z"/><path d="m1 6 5-5h16l-5 5z" stroke="#2f80ed" fill="#d5e6fa"/></svg><i></i>
      <svg viewBox="0 0 22 22" fill="#cfe2f8" stroke="#2f80ed"><path d="M1 6h16v15H1zM1 6l5-5h16l-5 5z"/></svg><i></i>
      <svg viewBox="0 0 22 22" fill="none" stroke="#666" stroke-dasharray="5 5"><rect x="1" y="1" width="20" height="20"/></svg>
      <svg viewBox="0 0 22 22" fill="none" stroke="#2f80ed"><rect x="1" y="1" width="20" height="20" rx="2" stroke="#666" stroke-dasharray="3 2"/><path d="m11 5 6 3v6l-6 3-6-3V8zM5 8l6 3 6-3M11 11v6"/></svg>
      <hr>
      <svg viewBox="0 0 22 22" fill="none" stroke="#666"><path d="M1 20V1h20M4 6h8M4 10h6M4 14h4"/><circle cx="16" cy="17" r="3" stroke="#2f80ed"/></svg>
    </div>
  </div>
</main>

<script>
// CAD drawing: coordinates are page pixels, the viewBox maps them onto the canvas
const GREEN = '#2cdf2e', CYAN = '#00e0e0', TEAL = '#008c90', GREY = '#808080';
const YEL = '#e6e600', SALMON = '#f88078', WHITE = '#d8d8d8', GRAY_FILL = '#5f5f5f', COL_EDGE = '#c8b400';
let out = '';

function poly(pts, fill, stroke) {
  out += `<polygon points="${pts}" fill="${fill}" stroke="${stroke || 'none'}" stroke-width="1"/>`;
}
function rect(x1, y1, x2, y2, fill, stroke) {
  poly(`${x1},${y1} ${x2},${y1} ${x2},${y2} ${x1},${y2}`, fill, stroke);
}
function line(x1, y1, x2, y2, c, w) {
  out += `<line x1="${x1}" y1="${y1}" x2="${x2}" y2="${y2}" stroke="${c}" stroke-width="${w || 1}"/>`;
}
// text fitted to its box; rot -90 reads bottom-up, rot 90 reads top-down
function txt(s, x1, y1, x2, y2, c, rot, cls) {
  const w = rot ? y2 - y1 : x2 - x1, h = rot ? x2 - x1 : y2 - y1;
  const fs = (h / 0.72).toFixed(1);
  let tf = `translate(${x1} ${y2})`;
  if (rot === -90) tf = `translate(${x2} ${y2}) rotate(-90)`;
  if (rot === 90) tf = `translate(${x1} ${y1}) rotate(90)`;
  out += `<text class="${cls || 'cad-t'}" transform="${tf}" font-size="${fs}" fill="${c}" stroke="${c}" stroke-width=".3" textLength="${w}" lengthAdjust="spacingAndGlyphs">${s}</text>`;
}

// blue strip under the upper beams
rect(610, 510.500, 1899, 516, '#2e2edc');
// green beams
poly('610,432 743,432 743,516 715,516 715,460 610,460', GREEN, '#00b8b8');
poly('953.600,432 1108,432 1108,446 1122.500,446 1122.500,516 1094,516 1094,460 988.600,460 988.600,473 953.600,473', GREEN, '#00b8b8');
poly('1333.600,432 1628,432 1628,460 1361.800,460 1361.800,516 1333.600,516', GREEN, '#00b8b8');
rect(1727, 432, 1899, 460, GREEN, '#00b8b8');
rect(610, 516, 953.600, 550, GREEN, CYAN);
rect(1032, 516, 1628, 544, GREEN, CYAN);
rect(1727, 516, 1899, 558, GREEN, CYAN);
rect(953.600, 550, 988.600, 800, GREEN, CYAN);
rect(1326.400, 544, 1361.800, 800, GREEN, CYAN);
rect(1670, 558, 1720, 800, GREEN, CYAN);
rect(1853, 558, 1882, 800, GREEN, CYAN);
// columns
rect(525, 550, 560.700, 800, GRAY_FILL, '#10d010');
rect(525, 431.700, 609.600, 550, GRAY_FILL, COL_EDGE);
line(525, 544, 560.700, 544, '#20e020');
rect(953.600, 473, 1032, 550, GRAY_FILL, COL_EDGE);
rect(1628, 431.700, 1727, 558, GRAY_FILL, COL_EDGE);

// axis lines
line(546.400, 188, 546.400, 361, '#00c000', 1.500);
line(546.400, 361, 546.400, 800, GREY);
line(1684.700, 188, 1684.700, 361, '#00c000', 1.500);
line(1684.700, 361, 1684.700, 800, GREY);
line(546, 319.700, 1875, 319.700, '#007000');
line(527, 339, 566, 299, '#007000');
line(1665, 340, 1705, 300, '#006000');
line(627, 188, 627, 446, '#007c90');
line(968, 188, 968, 312, '#00a000');
line(968, 312, 968, 800, GREY);
line(1185.700, 188, 1185.700, 550, '#00c800');
line(1347.500, 188, 1347.500, 312, '#20e020');
line(1347.500, 320, 1347.500, 800, GREY);
line(1867.300, 188, 1867.300, 333, '#20e020');
line(1867.300, 530, 1867.300, 690, GREY);
line(1867.300, 750, 1867.300, 800, GREY);
line(1383, 657, 1383, 800, '#008890');
line(1156.400, 449, 1156.400, 550, '#00a000');
line(1280.700, 376, 1280.700, 530, '#00b000');
line(1171.400, 520, 1171.400, 800, '#10d010');
line(1157, 522, 1186, 545, '#10e010');

// horizontal grey centre lines
[[405, 525], [662, 943], [985, 1283], [1333, 1628], [1727, 1875]].forEach(p => line(p[0], 446, p[1], 446, GREY));
line(428, 530.300, 1899, 530.300, GREY);
line(1032, 550, 1326, 550, '#a0a0a0');
line(1271, 530.300, 1328, 530.300, '#20ff20');
line(1301, 530.300, 1313, 530.300, '#d00000');
line(610, 530.300, 618, 530.300, '#b00000');
line(1610, 530.300, 1628, 530.300, '#b00000');

// stirrup ticks
[685, 695, 705, 753, 763, 773, 1065, 1075, 1085, 1132.500, 1142.500, 1152, 1296, 1306, 1316, 1371, 1381, 1391].forEach((x, i) =>
  line(x, 517, x, 543, i % 3 === 1 ? '#e01818' : '#b86020'));
[1833, 1843, 1855, 1892].forEach(x => line(x, 517, x, 557, '#c84818'));
line(729, 403, 729, 543, '#8a1010');
line(1109, 375, 1109, 543, '#8a1010');
line(1685, 612, 1685, 670, '#e01010', 1.500);
line(968, 569, 968, 628, '#9a6a10', 1.500);
line(1347.500, 569, 1347.500, 627, '#a01010');

// leaders
line(982, 462, 1223, 261, WHITE);
line(1361.800, 487.700, 1537.700, 374, WHITE);
line(1032, 472, 1093, 461, '#aaa');
line(1381, 480, 1628, 463, '#aaa');
line(1415, 598, 1628, 552, '#aaa');
line(1415, 598, 1373, 800, '#aaa');
line(562.500, 550, 673, 800, '#aaa');
line(844.600, 800, 953.600, 548, '#aaa');
line(875.700, 377, 1094, 480, YEL);
line(405, 487, 525, 487, YEL);
line(610, 487, 644, 487, YEL);
line(1733, 756.700, 1881, 756.700, '#888800', 1.500);

// section box and level mark
out += '<path d="M1122.500 432V375.700H1333.600V432" fill="none" stroke="#50667a"/>';
out += '<path d="M1146.400 367.700 1187.500 409 1230 367.700ZM1230 367.700H1366" fill="none" stroke="#00e000"/>';

// axis bubbles
[[546.500, 200, '1'], [1685, 200, '2'], [417, 530, 'D'], [1893, 530, 'D']].forEach(b => {
  out += `<circle cx="${b[0]}" cy="${b[1]}" r="11.500" fill="none" stroke="#008000"/>`;
  out += `<text x="${b[0]}" y="${b[1] + 7}" text-anchor="middle" font-size="19" fill="#fff" stroke="#fff" stroke-width=".4" class="cad-t">${b[2]}</text>`;
});

// annotations
txt('C8@100/200(2)', 632, 198, 808, 227, TEAL);
txt('2C14;2C14', 632, 248, 752, 277, TEAL);
txt('G4C12', 632, 297, 703, 326, TEAL);
txt('C6@200(2)', 1006, 198, 1128, 227, TEAL);
txt('2C14;2C14', 1006, 248, 1125, 277, TEAL);
txt('2C14', 1225, 192, 1253.600, 246.700, SALMON, -90);
txt('C8@100(2)', 1275, 159, 1304, 281.700, SALMON, -90);
txt('200x400', 1318.600, 181, 1348, 277.700, SALMON, -90);
txt('2C14', 1537, 296.700, 1566, 350, SALMON, -90);
txt('C6@200(2)', 1588, 282, 1617, 404, SALMON, -90);
txt('200x400', 1637, 288, 1666, 384, SALMON, -90);
txt('XL1(1)', 882, 301, 911, 370, YEL, -90);
txt('2C14;2C14', 393, 363, 422, 480, YEL, -90);
txt('N4C12', 447.500, 412, 477, 480, YEL, -90);
txt('2C14 2C14', 918, 405, 947, 526, TEAL, -90);
txt('7C20 4/3', 918, 560, 947, 680, TEAL, -90);
txt('4C22 2/2', 616, 481, 757, 510, TEAL);
txt('3C22', 708, 552, 767, 580, TEAL);
txt('C8@100(2)', 678.500, 601, 797, 630, TEAL);
txt('240x650', 688.600, 640, 790, 669, TEAL);
txt('3C22', 1048, 484, 1106, 513, TEAL);
txt('2C22', 1243.600, 551, 1303, 579, TEAL);
txt('200x650', 1218, 588, 1318, 617, TEAL);
txt('4C22 2/2', 1482, 481, 1603, 510, TEAL);
txt('4C22', 1733, 481, 1792, 510, TEAL);
txt('L12(1) 200x400', 1389, 664, 1576, 693, TEAL);
txt('C8@200(2)', 1389, 713, 1513, 743, TEAL);
txt('2C20;2C14', 1389, 758, 1510, 787, TEAL);
txt('3C14', 1285, 700, 1314, 752, TEAL, -90);
txt('7C25 4/3', 1628, 571, 1658, 693, TEAL, -90);
txt('240x650', 711, 752, 740, 852, TEAL, -90);
txt('C8@100(2)', 760, 782, 789, 900, TEAL, -90);
txt('7C20 4/4', 805, 778, 835, 898, TEAL, -90);
txt('L1(1)', 1733, 697, 1762, 750, YEL, -90);
txt('100', 873, 708, 937, 749, WHITE);
txt('150', 1003.600, 708, 1073, 749, WHITE);
txt('2400', 1103, 646, 1143, 752, WHITE, -90);
txt('1100', 1310, 411, 1350, 495, WHITE, -90);
txt('100', 793, 487, 832, 548, WHITE, 90);
txt('140', 817, 565, 857, 633, WHITE, 90);
txt('3.900', 1194, 319, 1293, 353, WHITE);
txt('( 雨蓬 )', 1378, 317, 1458, 342, WHITE, 0, 'cad-cn');
out += '<text x="1096" y="221" font-family="DejaVu Sans" font-size="17" fill="#fff" textLength="39" lengthAdjust="spacingAndGlyphs">8100</text>';

// selection circle and the red mark on top
out += '<ellipse cx="725" cy="513" rx="38" ry="33" fill="none" stroke="#d000d0"/>';
out += '<rect x="645.500" y="487.500" width="181" height="109" fill="none" stroke="#ff3333" stroke-width="6.500"/>';
// collapse handle
out += '<path d="M405 568 421 573V625L405 630Z" fill="#4a4a4a"/><path d="M416 594 412 599 416 604" fill="none" stroke="#999"/>';

document.getElementById('cad').innerHTML = out;
</script>
</body>
</html>
